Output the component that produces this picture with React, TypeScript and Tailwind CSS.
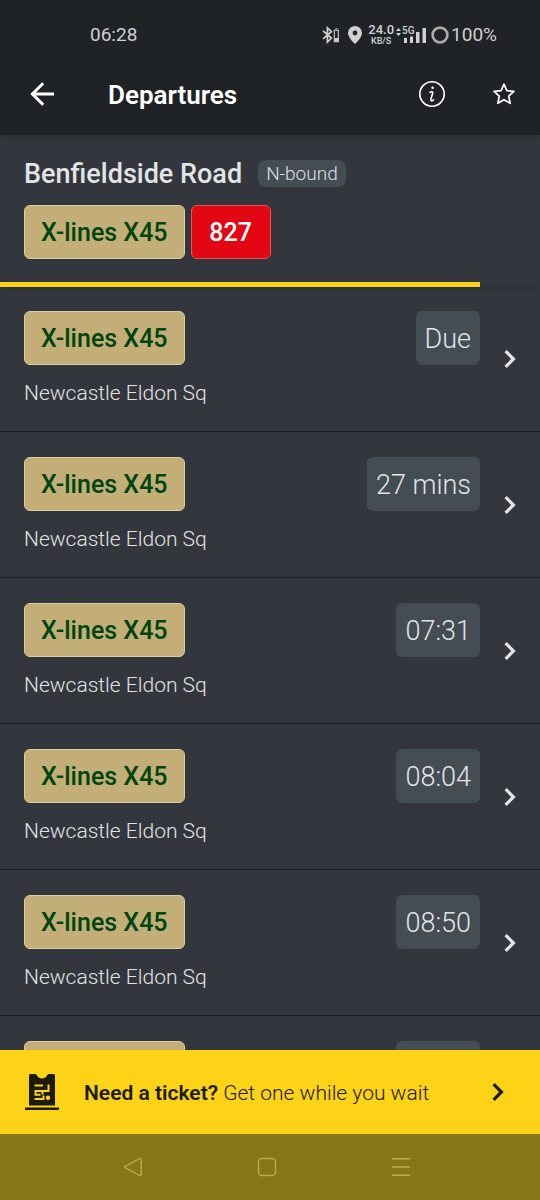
import clsx from "clsx";

type Departure = {
  id: number;
  line: string;
  destination: string;
  due: string;
};

const departures: Departure[] = [
  { id: 1, line: "X-lines X45", destination: "Newcastle Eldon Sq", due: "Due" },
  { id: 2, line: "X-lines X45", destination: "Newcastle Eldon Sq", due: "27 mins" },
  { id: 3, line: "X-lines X45", destination: "Newcastle Eldon Sq", due: "07:31" },
  { id: 4, line: "X-lines X45", destination: "Newcastle Eldon Sq", due: "08:04" },
  { id: 5, line: "X-lines X45", destination: "Newcastle Eldon Sq", due: "08:50" },
  { id: 6, line: "X-lines X45", destination: "Newcastle Eldon Sq", due: "09:20" },
];

function Chevron({ className }: { className?: string }) {
  return (
    <svg viewBox="0 0 12 20" className={clsx("h-5 w-3 shrink-0", className)} fill="none" stroke="currentColor" strokeWidth="3.2" aria-hidden="true">
      <path d="M1.6 2.2 9.4 10l-7.8 7.8" />
    </svg>
  );
}

function LineBadge({ children, red }: { children: string; red?: boolean }) {
  return (
    <span
      className={clsx(
        "inline-flex h-[54px] min-w-20 items-center justify-center rounded-md border px-4 pt-0.5 text-[25px] font-medium",
        red ? "border-[#f0525c] bg-[#e30613] text-white" : "border-[#dccfa4] bg-[#c3ae77] text-[#00440f]"
      )}
    >
      {children}
    </span>
  );
}

function StatusBar() {
  return (
    <div className="flex h-[70px] items-center justify-between pr-[43px] pl-[90px] text-[19px] text-[#cfd1d1]">
      <span>06:28</span>
      <div className="flex items-center">
        {/* bluetooth with device battery */}
        <svg viewBox="0 0 18 18" className="mr-2 h-[18px] w-[18px]" fill="none" stroke="currentColor" strokeWidth="1.7" aria-hidden="true">
          <path d="M1 4.8 9.4 12 5.4 16V1.8L9.4 5.6 1 12.8" />
          <path d="M12.3 4.2h4v11.600h-4zM13.3 2.800h2" strokeWidth="1.1" />
          <path d="M12.5 12h3.600v3.600h-3.600z" fill="currentColor" stroke="none" />
        </svg>
        <svg viewBox="0 0 14 18" className="mr-1.5 h-[18px] w-3.5" fill="currentColor" aria-hidden="true">
          <path fillRule="evenodd" d="M7 0a7 7 0 0 1 7 7c0 4-4.400 8.500-7 11-2.600-2.500-7-7-7-11a7 7 0 0 1 7-7Zm0 4.600a2.400 2.400 0 1 0 0 4.800 2.400 2.400 0 0 0 0-4.800Z" />
        </svg>
        <span className="flex flex-col items-center font-medium">
          <span className="text-[13px] leading-[12px]">24.0</span>
          <span className="text-[9px] leading-[10px]">KB/S</span>
        </span>
        <span className="ml-0.5 flex items-start">
          <svg viewBox="0 0 5 8" className="mt-0.5 h-2 w-[5px]" fill="currentColor" aria-hidden="true">
            <path d="M2.500 0 5 3H0ZM2.500 8 0 5h5Z" />
          </svg>
          <span className="relative h-[18px] w-[26px]">
            <span className="absolute top-0 left-px text-[10px] leading-[10px] font-medium">5G</span>
            <svg viewBox="0 0 26 18" className="h-[18px] w-[26px]" fill="currentColor" aria-hidden="true">
              <path d="M3 12h3v5H3zM9 10.500h3V17H9zM15 6h3.500v11H15zM21.500 2H25v15h-3.500z" />
            </svg>
          </span>
        </span>
        <svg viewBox="0 0 18 18" className="mr-0.5 ml-1 h-[18px] w-[18px]" fill="none" stroke="#a9abab" strokeWidth="2.6" aria-hidden="true">
          <circle cx="9" cy="9" r="7.4" />
        </svg>
        <span>100%</span>
      </div>
    </div>
  );
}

function AppBar() {
  return (
    <div className="flex h-12 items-center pr-3 pl-[18px] text-white">
      <button type="button" aria-label="Back" className="flex size-12 items-center justify-center">
        <svg viewBox="0 0 24 24" className="size-6" fill="none" stroke="currentColor" strokeWidth="3" aria-hidden="true">
          <path d="M13.200 1.200 2.400 12l10.800 10.800M2 12h22" />
        </svg>
      </button>
      <h1 className="ml-[42px] flex-1 pt-0.5 text-[26px] font-semibold">Departures</h1>
      <button type="button" aria-label="Information" className="mr-6 flex size-12 items-center justify-center">
        <svg viewBox="0 0 28 28" className="size-7" fill="none" stroke="currentColor" strokeWidth="1.6" strokeLinecap="round" strokeLinejoin="round" aria-hidden="true">
          <circle cx="14" cy="14" r="12.2" />
          <circle cx="14.6" cy="7.8" r="1.3" fill="currentColor" stroke="none" />
          <path d="M12 12.400c1.800-1.300 3-.700 2.600 1.200l-1.600 5.200c-.600 2.300 1 2.700 2.600 1" />
        </svg>
      </button>
      <button type="button" aria-label="Add to favourites" className="flex size-12 items-center justify-center">
        <svg viewBox="0 0 24 24" className="size-6" fill="none" stroke="currentColor" strokeWidth="1.7" strokeLinejoin="round" aria-hidden="true">
          <path d="m12 2.200 2.900 6.500 7 .700-5.200 4.800 1.500 7.100L12 17.700l-6.200 3.600 1.500-7.100-5.200-4.800 7-.700Z" />
        </svg>
      </button>
    </div>
  );
}

function StopHeader() {
  return (
    <section className="shadow-sm">
      <div className="px-6 pt-5 pb-[23px]">
        <div className="flex h-9 items-center">
          <h2 className="pt-0.5 text-[27px] font-medium text-[#e2e4e6]">Benfieldside Road</h2>
          <span className="ml-4 rounded-lg bg-[#444c54] px-2 text-[19px] leading-[27px] font-light text-[#dfe2e5]">N-bound</span>
        </div>
        <div className="mt-3.5 flex gap-1.5">
          <LineBadge>X-lines X45</LineBadge>
          <LineBadge red>827</LineBadge>
        </div>
      </div>
      {/* time left until next refresh */}
      <div className="h-[5px] w-8/9 bg-[#fbd31c]" />
    </section>
  );
}

function DepartureRow({ departure }: { departure: Departure }) {
  return (
    <li className="border-b border-[#1b1f24]">
      <a href={`#departure-${departure.id}`} className="flex h-[145px] items-center px-6 text-[#e2e4e6]">
        <div className="flex-1">
          <div className="flex items-center justify-between">
            <LineBadge>{departure.line}</LineBadge>
            <span className="inline-flex h-[54px] items-center rounded-md bg-[#444c54] px-[9px] pt-1 text-[27px] font-light">{departure.due}</span>
          </div>
          <p className="mt-3.5 text-[21px] leading-7 font-light">{departure.destination}</p>
        </div>
        <Chevron className="ml-6" />
      </a>
    </li>
  );
}

function TicketBanner() {
  return (
    <a href="#tickets" className="flex h-[84px] shrink-0 items-center bg-[#fcd317] px-6 text-[#1d1a08]">
      <svg viewBox="0 0 36 38" className="h-[38px] w-9" fill="currentColor" aria-hidden="true">
        <path d="M1 34.500h34v2.500H1z" />
        <path d="M6.500 1H11c1 0 1.500.600 2 1.500 2 4 8 4 10 0 .500-.900 1-1.500 2-1.500h4.500A1.500 1.500 0 0 1 31 2.500V32.500H5V2.500A1.500 1.500 0 0 1 6.500 1Z" />
        <g fill="none" stroke="#fcd317" strokeWidth="2">
          <path d="M10.500 12.500h8.500M24.500 11.500v7.500M10.500 18h15M18.500 18v3.500M11.500 18v4.500M10.500 21.800h6M10.500 26h9v-3.500" />
        </g>
        <circle cx="24" cy="24.800" r="2.200" fill="#fcd317" />
      </svg>
      <span className="ml-6 flex-1 pt-1 text-[21px] font-light">
        <strong className="font-semibold">Need a ticket?</strong> Get one while you wait
      </span>
      <Chevron className="mr-3" />
    </a>
  );
}

function SystemNav() {
  return (
    <nav className="flex h-[66px] shrink-0 items-center justify-center gap-[114px] bg-[#877619] pr-1.5 text-[#b9a955]">
      <button type="button" aria-label="System back">
        <svg viewBox="0 0 20 20" className="size-5" fill="none" stroke="currentColor" strokeWidth="1.4" strokeLinejoin="round" aria-hidden="true">
          <path d="M2 9.300 16.800 1.500q1.400-.500 1.400 1v15q0 1.500-1.400 1L2 10.700q-1-.700 0-1.400Z" />
        </svg>
      </button>
      <button type="button" aria-label="Home">
        <svg viewBox="0 0 20 20" className="size-5" fill="none" stroke="currentColor" strokeWidth="1.4" aria-hidden="true">
          <rect x="1.5" y="1.5" width="17" height="17" rx="3.5" />
        </svg>
      </button>
      <button type="button" aria-label="Recent apps">
        <svg viewBox="0 0 20 20" className="size-5" fill="none" stroke="currentColor" strokeWidth="1.5" aria-hidden="true">
          <path d="M1 1.800h18M1 10h18M1 18.200h18" />
        </svg>
      </button>
    </nav>
  );
}

export default function App() {
  return (
    <div className="flex h-screen flex-col overflow-hidden bg-[#33373d] font-[Roboto,sans-serif]">
      <header className="relative shrink-0 bg-[#202325] pb-[17px] shadow-md">
        <StatusBar />
        <AppBar />
      </header>
      <main className="min-h-0 flex-1 overflow-hidden">
        <StopHeader />
        <ul className="-mt-px">
          {departures.map((departure) => (
            <DepartureRow key={departure.id} departure={departure} />
          ))}
        </ul>
      </main>
      <TicketBanner />
      <SystemNav />
    </div>
  );
}
